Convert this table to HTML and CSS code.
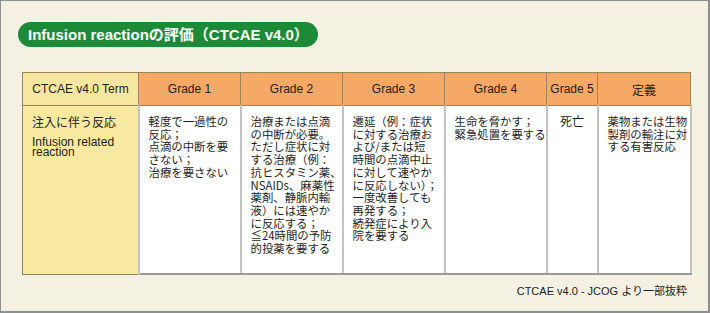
FILE: index.html
```html
<!DOCTYPE html>
<html lang="ja">
<head>
<meta charset="utf-8">
<link rel="stylesheet" href="styles.css">
</head>
<body>
<div class="frame">
  <div class="title">Infusion reactionの評価（CTCAE v4.0）</div>
  <table class="grid">
    <colgroup>
      <col class="c-term"><col class="c-g"><col class="c-g"><col class="c-g"><col class="c-g"><col class="c-g5"><col class="c-def">
    </colgroup>
    <thead>
      <tr>
        <th class="h-term">CTCAE v4.0 Term</th>
        <th>Grade 1</th>
        <th>Grade 2</th>
        <th>Grade 3</th>
        <th>Grade 4</th>
        <th>Grade 5</th>
        <th>定義</th>
      </tr>
    </thead>
    <tbody>
      <tr>
        <td class="b-term"><div class="jp">注入に伴う反応</div><div class="en">Infusion related<br>reaction</div></td>
        <td>軽度で一過性の<br>反応；<br>点滴の中断を要<br>さない；<br>治療を要さない</td>
        <td>治療または点滴<br>の中断が必要。<br>ただし症状に対<br>する治療（例：<br>抗ヒスタミン薬、<br>NSAIDs、麻薬性<br>薬剤、静脈内輸<br>液）には速やか<br>に反応する；<br>≦24時間の予防<br>的投薬を要する</td>
        <td>遷延（例：症状<br>に対する治療お<br>よび/または短<br>時間の点滴中止<br>に対して速やか<br>に反応しない）；<br>一度改善しても<br>再発する；<br>続発症により入<br>院を要する</td>
        <td>生命を脅かす；<br>緊急処置を要する</td>
        <td class="b-g5">死亡</td>
        <td>薬物または生物<br>製剤の輸注に対<br>する有害反応</td>
      </tr>
    </tbody>
  </table>
  <div class="source">CTCAE v4.0 - JCOG より一部抜粋</div>
</div>
</body>
</html>
```
FILE: styles.css
```css
html, body {
  margin: 0;
  padding: 0;
}
body {
  font-family: "Liberation Sans", Arial, "Noto Sans CJK JP", sans-serif;
  color: #1e1e1e;
}
.frame {
  box-sizing: border-box;
  width: 710px;
  height: 313px;
  background: #f4f1e2;
  border: 1px solid #8e8e8e;
  border-right-width: 2px;
  border-bottom-width: 2px;
  padding: 21px 0 0 17px;
}
.title {
  display: inline-block;
  box-sizing: border-box;
  height: 25px;
  line-height: 25px;
  padding: 0 9px 0 10px;
  border-radius: 13px;
  background: #1c8a37;
  color: #fff;
  font-weight: bold;
  font-size: 15px;
}
.grid {
  margin: 25px 0 0 4px;
  border-collapse: collapse;
  table-layout: fixed;
  width: 668px;
  font-size: 12px;
}
.c-term { width: 116px; }
.c-g { width: 102px; }
.c-g5 { width: 51px; }
.c-def { width: 93px; }
.grid th {
  height: 32px;
  padding: 0;
  background: #f6a866;
  border: 1px solid #a08258;
  font-weight: normal;
  text-align: center;
  white-space: nowrap;
}
.grid th.h-term {
  background: #f6e7a0;
  border-left-color: #8f8565;
}
.grid td {
  height: 158px;
  vertical-align: top;
  background: #fff;
  border: 2px solid #c2c2c2;
  border-top: 0;
  padding: 9px 0 0 9px;
  font-size: 11.4px;
  line-height: 12.7px;
  white-space: nowrap;
  font-family: "Noto Sans CJK JP", sans-serif;
}
.grid td.b-term {
  background: #f7e9a0;
  border-left: 1px solid #8f8565;
  border-bottom: 1px solid #8f8565;
  padding-left: 9px;
  font-size: 12px;
}
.grid tbody td {
  border-bottom-color: #9a9a9a;
}
.b-term .jp {
  line-height: 14px;
}
.b-term .en {
  margin-top: 8px;
  font-family: "Liberation Sans", Arial, sans-serif;
  line-height: 10px;
}
.grid td.b-g5 {
  text-align: center;
  padding-left: 0;
  font-size: 12px;
}
.source {
  margin: 7px 0 0 0;
  width: 669px;
  text-align: right;
  font-size: 11px;
}
```
